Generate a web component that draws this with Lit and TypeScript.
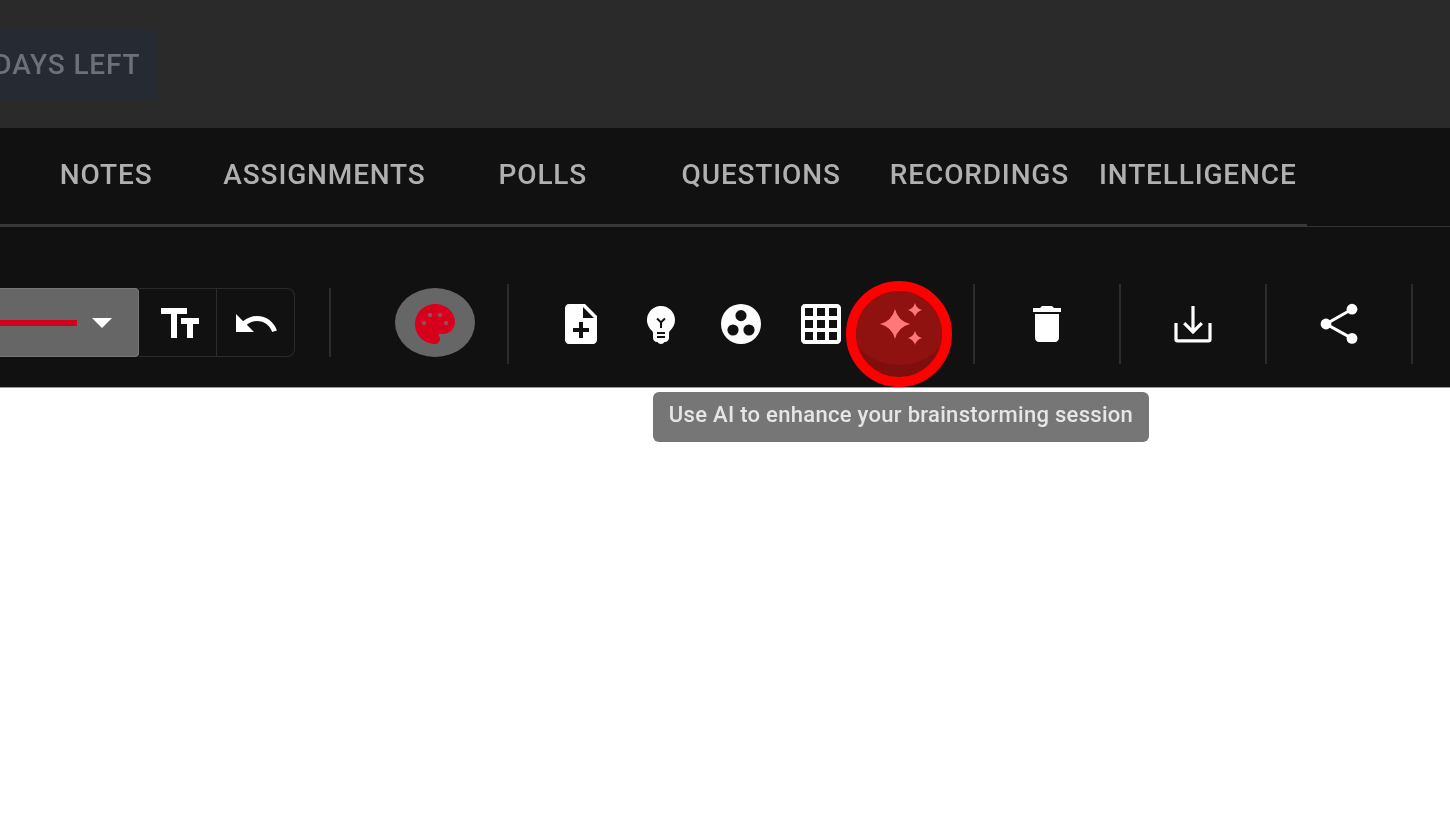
import { LitElement, html, css, svg } from 'lit';
import { customElement } from 'lit/decorators.js';

const TABS = ['NOTES', 'ASSIGNMENTS', 'POLLS', 'QUESTIONS', 'RECORDINGS', 'INTELLIGENCE'];

const icon = (d: unknown, size = 48) => html`<svg width=${size} height=${size} viewBox="0 0 24 24" fill="currentColor">${d}</svg>`;

const ICONS = {
  text: svg`<path d="M2.5 4v3h5v12h3V7h5V4h-13zm19 5h-9v3h3v7h3v-7h3V9z"/>`,
  undo: svg`<path d="M12.5 8c-2.65 0-5.05.99-6.9 2.6L2 7v9h9l-3.62-3.62c1.39-1.16 3.16-1.88 5.12-1.88 3.54 0 6.55 2.31 7.6 5.5l2.37-.78C21.08 11.03 17.15 8 12.5 8z"/>`,
  palette: svg`<path d="M12 2C6.49 2 2 6.49 2 12s4.49 10 10 10c1.38 0 2.5-1.12 2.5-2.5 0-.61-.23-1.2-.64-1.67-.08-.1-.13-.21-.13-.33 0-.28.22-.5.5-.5H16c3.31 0 6-2.69 6-6 0-4.96-4.49-9-10-9z"/>
    <g fill="#9c4a55"><circle cx="6.5" cy="11.5" r="1.1"/><circle cx="9.5" cy="7.5" r="1.1"/><circle cx="14.5" cy="7.5" r="1.1"/><circle cx="17.5" cy="11.5" r="1.1"/></g>`,
  note: svg`<path d="M14 2H6c-1.1 0-1.99.9-1.99 2L4 20c0 1.1.89 2 1.99 2H18c1.1 0 2-.9 2-2V8l-6-6zm2 14h-3v3h-2v-3H8v-2h3v-3h2v3h3v2zm-3-7V3.5L18.5 9H13z"/>`,
  bulb: svg`<path d="M12 3c-.46 0-.93.04-1.4.14-2.76.53-4.96 2.76-5.48 5.52-.48 2.61.48 5.01 2.22 6.56.43.38.66.91.66 1.47V19c0 1.1.9 2 2 2h.28c.35.6.98 1 1.72 1s1.38-.4 1.72-1H14c1.1 0 2-.9 2-2v-2.31c0-.55.22-1.09.64-1.46C18.09 13.95 19 12.08 19 10c0-3.87-3.13-7-7-7zm2 16h-4v-1h4v1zm0-2h-4v-1h4v1zm-1.5-5.59V14h-1v-2.59L9.67 9.59l.71-.71L12 10.5l1.62-1.62.71.71-1.83 1.82z"/>`,
  dots: svg`<path fill-rule="evenodd" d="M12 2a10 10 0 1 0 0 20 10 10 0 0 0 0-20zm0 3a2.8 2.8 0 1 1 0 5.6A2.8 2.8 0 0 1 12 5zm-4 7.2A2.8 2.8 0 1 1 8 17.8a2.8 2.8 0 0 1 0-5.6zm8 0a2.8 2.8 0 1 1 0 5.6 2.8 2.8 0 0 1 0-5.6z"/>`,
  grid: svg`<path d="M20 2H4c-1.1 0-2 .9-2 2v16c0 1.1.9 2 2 2h16c1.1 0 2-.9 2-2V4c0-1.1-.9-2-2-2zM8 20H4v-4h4v4zm0-6H4v-4h4v4zm0-6H4V4h4v4zm6 12h-4v-4h4v4zm0-6h-4v-4h4v4zm0-6h-4V4h4v4zm6 12h-4v-4h4v4zm0-6h-4v-4h4v4zm0-6h-4V4h4v4z"/>`,
  trash: svg`<path d="M6 19c0 1.1.9 2 2 2h8c1.1 0 2-.9 2-2V7H6v12zM19 4h-3.5l-1-1h-5l-1 1H5v2h14V4z"/>`,
  download: svg`<path fill="none" stroke="currentColor" stroke-width="1.6" d="M3.5 11.5v8.2c0 .4.3.7.7.7h15.6c.4 0 .7-.3.7-.7v-8.2M12 3v13M7.6 11.6l4.4 4.4 4.4-4.4"/>`,
  share: svg`<circle cx="18.5" cy="4.6" r="2.7"/><circle cx="5.5" cy="12" r="2.7"/><circle cx="18.5" cy="19.2" r="2.7"/><path fill="none" stroke="currentColor" stroke-width="1.5" d="M18.5 4.6 5.5 12l13 7.2"/>`,
};

@customElement('app-root')
export class AppRoot extends LitElement {
  static styles = css`
    :host {
      display: block;
      height: 816px;
      background: #fff;
      overflow: hidden;
      font-family: Roboto, 'Liberation Sans', sans-serif;
      filter: blur(0.5px);
    }
    .header {
      height: 128px;
      box-sizing: border-box;
      padding-top: 30px;
      background: #2a2a2a;
    }
    .chip {
      width: 157px;
      height: 70px;
      box-sizing: border-box;
      padding: 0 16.5px 1px 0;
      display: flex;
      align-items: center;
      justify-content: flex-end;
      overflow: hidden;
      white-space: nowrap;
      border-radius: 0 4px 4px 0;
      background: #262a33;
      color: #6d7077;
      font-size: 28px;
      font-weight: 500;
      letter-spacing: 0.85px;
    }
    .tabs {
      height: 99px;
      box-sizing: border-box;
      background: #111;
      border-bottom: 1px solid #333;
    }
    .tab-list {
      display: flex;
      width: 1307px;
      height: 99px;
      box-sizing: border-box;
      padding-bottom: 4px;
      border-bottom: 3px solid #383838;
    }
    .tab {
      flex: 0 0 218.33px;
      display: flex;
      align-items: center;
      justify-content: center;
      white-space: nowrap;
      color: #b0b0b0;
      font-size: 28px;
      font-weight: 500;
      letter-spacing: 0.85px;
    }
    .tab:first-child {
      margin-left: -3px;
    }
    .toolbar {
      height: 161px;
      box-sizing: border-box;
      padding-top: 61px;
      display: flex;
      align-items: flex-start;
      background: #111;
      border-bottom: 1px solid #9a9a9a;
      color: #fff;
    }
    .select {
      flex: 0 0 139px;
      height: 69px;
      box-sizing: border-box;
      padding: 1px 26px 0 0;
      display: flex;
      align-items: center;
      gap: 15px;
      border: 1px solid #777;
      border-left: 0;
      border-radius: 0 4px 4px 0;
      background: #666;
    }
    .line {
      width: 77px;
      height: 6px;
      background: #d0021b;
    }
    .caret {
      width: 0;
      height: 0;
      border-left: 10px solid transparent;
      border-right: 10px solid transparent;
      border-top: 10px solid #fff;
    }
    .group {
      display: flex;
      height: 69px;
      box-sizing: border-box;
      border: 1px solid #2c2c2c;
      border-left: 0;
      border-radius: 0 8px 8px 0;
    }
    .cell {
      width: 77px;
      padding-top: 2px;
      box-sizing: border-box;
      display: flex;
      align-items: center;
      justify-content: center;
    }
    .cell + .cell {
      width: 78px;
      border-left: 1px solid #2c2c2c;
    }
    .cell.text {
      padding-left: 4px;
    }
    .rule {
      flex: 0 0 2px;
      height: 69px;
      background: #2c2c2c;
    }
    .rule.first {
      margin-left: 34px;
    }
    .rule.tall {
      height: 80px;
      margin-top: -4px;
    }
    .palette {
      width: 80px;
      height: 69px;
      margin-left: 64px;
      margin-right: 32px;
      padding-top: 2px;
      box-sizing: border-box;
      flex: none;
      display: flex;
      align-items: center;
      justify-content: center;
      border-radius: 50%;
      background: #666;
      color: #d6001c;
    }
    .btn {
      flex: 0 0 80px;
      height: 69px;
      padding-top: 2px;
      box-sizing: border-box;
      display: flex;
      align-items: center;
      justify-content: center;
    }
    .btn.note {
      margin-left: 32px;
    }
    .ai {
      position: relative;
      margin-left: -3px;
      margin-right: 35px;
    }
    .ring {
      position: absolute;
      left: -12px;
      top: -7px;
      width: 106px;
      height: 106px;
      box-sizing: border-box;
      border: 10px solid #fe0000;
      border-radius: 50%;
      background: #7f0f0e;
      overflow: hidden;
    }
    .ring::before {
      content: '';
      position: absolute;
      left: -7px;
      top: -12px;
      width: 100px;
      height: 86px;
      border-radius: 50%;
      background: #8f1211;
    }
    .ring svg {
      position: absolute;
      left: 0;
      top: 0;
      color: #ff7878;
    }
    .wide {
      flex: 0 0 144px;
      height: 69px;
      padding-top: 2px;
      box-sizing: border-box;
      display: flex;
      align-items: center;
      justify-content: center;
    }
    .tooltip {
      position: absolute;
      left: 653px;
      top: 392px;
      width: 496px;
      height: 50px;
      box-sizing: border-box;
      padding-bottom: 6px;
      display: flex;
      align-items: center;
      justify-content: center;
      white-space: nowrap;
      border-radius: 6px;
      background: #767676;
      color: #e6e6e6;
      font-size: 22px;
      font-weight: 500;
      letter-spacing: 0.3px;
    }
  `;

  render() {
    return html`
      <div class="header"><div class="chip">DAYS LEFT</div></div>
      <div class="tabs">
        <div class="tab-list">${TABS.map((t) => html`<div class="tab">${t}</div>`)}</div>
      </div>
      <div class="toolbar">
        <div class="select"><div class="line"></div><div class="caret"></div></div>
        <div class="group">
          <div class="cell text">${icon(ICONS.text)}</div>
          <div class="cell">${icon(ICONS.undo)}</div>
        </div>
        <div class="rule first"></div>
        <div class="palette">${icon(ICONS.palette)}</div>
        <div class="rule tall"></div>
        <div class="btn note">${icon(ICONS.note)}</div>
        <div class="btn">${icon(ICONS.bulb)}</div>
        <div class="btn">${icon(ICONS.dots)}</div>
        <div class="btn">${icon(ICONS.grid)}</div>
        <div class="btn ai">
          <div class="ring">
            <svg width="86" height="86" viewBox="0 0 86 86" fill="currentColor">
              <path d="M39 18 Q42 30 54 33 Q42 36 39 48 Q36 36 24 33 Q36 30 39 18Z" />
              <path d="M59 12 Q60.5 17.5 66 19 Q60.5 20.5 59 26 Q57.5 20.5 52 19 Q57.5 17.5 59 12Z" />
              <path d="M59 40 Q60.5 45.5 66 47 Q60.5 48.5 59 54 Q57.5 48.5 52 47 Q57.5 45.5 59 40Z" />
            </svg>
          </div>
        </div>
        <div class="rule tall"></div>
        <div class="wide">${icon(ICONS.trash)}</div>
        <div class="rule tall"></div>
        <div class="wide">${icon(ICONS.download)}</div>
        <div class="rule tall"></div>
        <div class="wide">${icon(ICONS.share)}</div>
        <div class="rule tall"></div>
      </div>
      <div class="tooltip">Use AI to enhance your brainstorming session</div>
    `;
  }
}
